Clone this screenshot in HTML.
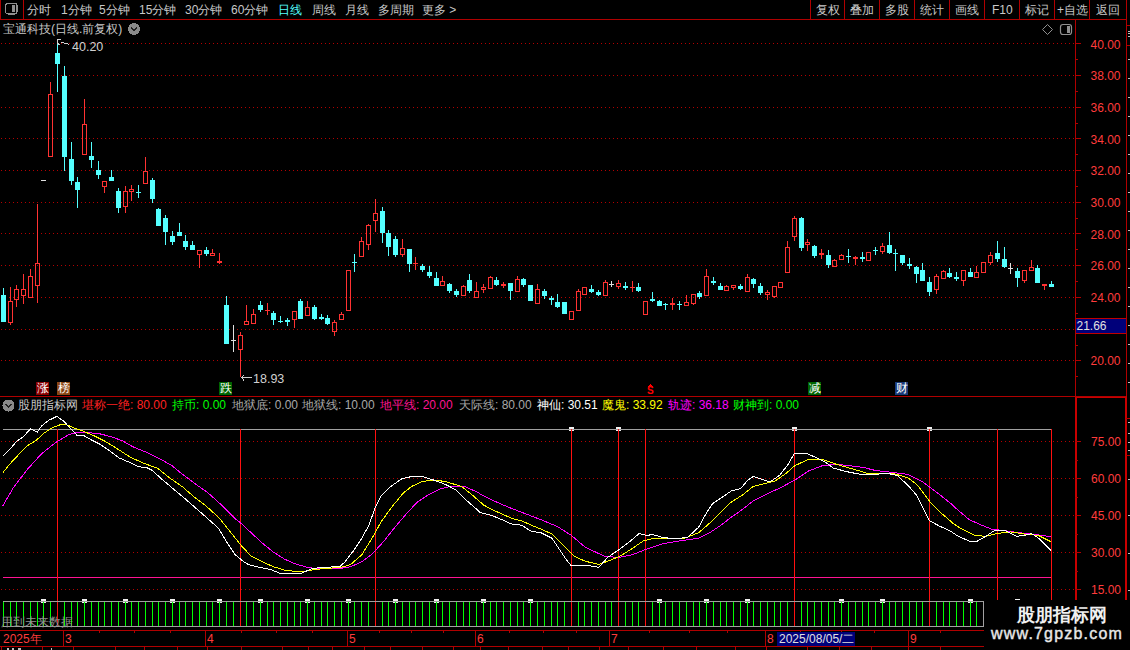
<!DOCTYPE html>
<html><head><meta charset="utf-8"><style>
html,body{margin:0;padding:0;background:#000;}
body{width:1130px;height:650px;position:relative;overflow:hidden;font-family:"Liberation Sans",sans-serif;}
svg{position:absolute;left:0;top:0;shape-rendering:crispEdges;}
.t{position:absolute;white-space:nowrap;line-height:14px;font-size:12px;}
</style></head><body>
<svg width="1130" height="650" viewBox="0 0 1130 650">
<line x1="0" y1="19.5" x2="1126" y2="19.5" stroke="#b00000"/>
<line x1="0.5" y1="0" x2="0.5" y2="19" stroke="#b00000"/>
<line x1="23.5" y1="0" x2="23.5" y2="19" stroke="#b00000"/>
<rect x="5.5" y="3.5" width="11.5" height="10.5" rx="2.5" fill="none" stroke="#909090" stroke-width="1.2"/>
<rect x="12" y="5" width="3" height="7" fill="#909090"/>
<line x1="810.5" y1="0" x2="810.5" y2="19" stroke="#b00000"/>
<line x1="844.5" y1="0" x2="844.5" y2="19" stroke="#b00000"/>
<line x1="879.5" y1="0" x2="879.5" y2="19" stroke="#b00000"/>
<line x1="914.5" y1="0" x2="914.5" y2="19" stroke="#b00000"/>
<line x1="949.5" y1="0" x2="949.5" y2="19" stroke="#b00000"/>
<line x1="984.5" y1="0" x2="984.5" y2="19" stroke="#b00000"/>
<line x1="1019.5" y1="0" x2="1019.5" y2="19" stroke="#b00000"/>
<line x1="1054.5" y1="0" x2="1054.5" y2="19" stroke="#b00000"/>
<line x1="1089.5" y1="0" x2="1089.5" y2="19" stroke="#b00000"/>
<line x1="1" y1="43.5" x2="1075" y2="43.5" stroke="#b40000" stroke-width="1" stroke-dasharray="1 3"/>
<line x1="1" y1="75.5" x2="1075" y2="75.5" stroke="#b40000" stroke-width="1" stroke-dasharray="1 3"/>
<line x1="1" y1="107.5" x2="1075" y2="107.5" stroke="#b40000" stroke-width="1" stroke-dasharray="1 3"/>
<line x1="1" y1="138.5" x2="1075" y2="138.5" stroke="#b40000" stroke-width="1" stroke-dasharray="1 3"/>
<line x1="1" y1="170.5" x2="1075" y2="170.5" stroke="#b40000" stroke-width="1" stroke-dasharray="1 3"/>
<line x1="1" y1="202.5" x2="1075" y2="202.5" stroke="#b40000" stroke-width="1" stroke-dasharray="1 3"/>
<line x1="1" y1="233.5" x2="1075" y2="233.5" stroke="#b40000" stroke-width="1" stroke-dasharray="1 3"/>
<line x1="1" y1="265.5" x2="1075" y2="265.5" stroke="#b40000" stroke-width="1" stroke-dasharray="1 3"/>
<line x1="1" y1="297.5" x2="1075" y2="297.5" stroke="#b40000" stroke-width="1" stroke-dasharray="1 3"/>
<line x1="1" y1="329.5" x2="1075" y2="329.5" stroke="#b40000" stroke-width="1" stroke-dasharray="1 3"/>
<line x1="1" y1="360.5" x2="1075" y2="360.5" stroke="#b40000" stroke-width="1" stroke-dasharray="1 3"/>
<line x1="1075.5" y1="20" x2="1075.5" y2="396" stroke="#b00000" stroke-width="1"/>
<line x1="1126.5" y1="0" x2="1126.5" y2="396" stroke="#b00000" stroke-width="1"/>
<rect x="1075" y="396" width="2" height="254" fill="#c80000"/>
<rect x="1125" y="396" width="2" height="254" fill="#c80000"/>
<rect x="1075" y="396" width="52" height="2" fill="#c80000"/>
<line x1="1075" y1="376.5" x2="1078" y2="376.5" stroke="#b00000"/>
<line x1="1075" y1="360.5" x2="1081" y2="360.5" stroke="#b00000"/>
<line x1="1075" y1="345.5" x2="1078" y2="345.5" stroke="#b00000"/>
<line x1="1075" y1="329.5" x2="1081" y2="329.5" stroke="#b00000"/>
<line x1="1075" y1="313.5" x2="1078" y2="313.5" stroke="#b00000"/>
<line x1="1075" y1="297.5" x2="1081" y2="297.5" stroke="#b00000"/>
<line x1="1075" y1="281.5" x2="1078" y2="281.5" stroke="#b00000"/>
<line x1="1075" y1="265.5" x2="1081" y2="265.5" stroke="#b00000"/>
<line x1="1075" y1="249.5" x2="1078" y2="249.5" stroke="#b00000"/>
<line x1="1075" y1="233.5" x2="1081" y2="233.5" stroke="#b00000"/>
<line x1="1075" y1="218.5" x2="1078" y2="218.5" stroke="#b00000"/>
<line x1="1075" y1="202.5" x2="1081" y2="202.5" stroke="#b00000"/>
<line x1="1075" y1="186.5" x2="1078" y2="186.5" stroke="#b00000"/>
<line x1="1075" y1="170.5" x2="1081" y2="170.5" stroke="#b00000"/>
<line x1="1075" y1="154.5" x2="1078" y2="154.5" stroke="#b00000"/>
<line x1="1075" y1="138.5" x2="1081" y2="138.5" stroke="#b00000"/>
<line x1="1075" y1="123.5" x2="1078" y2="123.5" stroke="#b00000"/>
<line x1="1075" y1="107.5" x2="1081" y2="107.5" stroke="#b00000"/>
<line x1="1075" y1="91.5" x2="1078" y2="91.5" stroke="#b00000"/>
<line x1="1075" y1="75.5" x2="1081" y2="75.5" stroke="#b00000"/>
<line x1="1075" y1="59.5" x2="1078" y2="59.5" stroke="#b00000"/>
<line x1="1075" y1="43.5" x2="1081" y2="43.5" stroke="#b00000"/>
<line x1="1126" y1="25.5" x2="1130" y2="25.5" stroke="#b00000"/>
<line x1="1126" y1="45.5" x2="1130" y2="45.5" stroke="#b00000"/>
<line x1="1128" y1="31.5" x2="1130" y2="31.5" stroke="#c0c0c0"/>
<line x1="1128" y1="33.5" x2="1130" y2="33.5" stroke="#c0c0c0"/>
<line x1="1128" y1="36.5" x2="1130" y2="36.5" stroke="#c0c0c0"/>
<line x1="1128" y1="59.5" x2="1130" y2="59.5" stroke="#c0c0c0"/>
<line x1="1128" y1="78.5" x2="1130" y2="78.5" stroke="#c0c0c0"/>
<line x1="1128" y1="97.5" x2="1130" y2="97.5" stroke="#c0c0c0"/>
<line x1="1128" y1="116.5" x2="1130" y2="116.5" stroke="#c0c0c0"/>
<line x1="1128" y1="135.5" x2="1130" y2="135.5" stroke="#c0c0c0"/>
<line x1="1128" y1="154.5" x2="1130" y2="154.5" stroke="#c0c0c0"/>
<line x1="1128" y1="173.5" x2="1130" y2="173.5" stroke="#c0c0c0"/>
<line x1="1128" y1="192.5" x2="1130" y2="192.5" stroke="#c0c0c0"/>
<line x1="1128" y1="211.5" x2="1130" y2="211.5" stroke="#c0c0c0"/>
<line x1="1128" y1="230.5" x2="1130" y2="230.5" stroke="#c0c0c0"/>
<line x1="1128" y1="249.5" x2="1130" y2="249.5" stroke="#c0c0c0"/>
<line x1="1128" y1="268.5" x2="1130" y2="268.5" stroke="#c0c0c0"/>
<line x1="1128" y1="287.5" x2="1130" y2="287.5" stroke="#c0c0c0"/>
<line x1="1128" y1="306.5" x2="1130" y2="306.5" stroke="#c0c0c0"/>
<line x1="1128" y1="325.5" x2="1130" y2="325.5" stroke="#c0c0c0"/>
<line x1="1128" y1="344.5" x2="1130" y2="344.5" stroke="#c0c0c0"/>
<line x1="1128" y1="363.5" x2="1130" y2="363.5" stroke="#c0c0c0"/>
<line x1="1128" y1="382.5" x2="1130" y2="382.5" stroke="#c0c0c0"/>
<line x1="3.5" y1="288" x2="3.5" y2="322" stroke="#54ffff"/>
<rect x="1" y="295" width="5" height="27" fill="#54ffff"/>
<line x1="10.5" y1="287" x2="10.5" y2="301" stroke="#ff3232"/>
<line x1="10.5" y1="323" x2="10.5" y2="325" stroke="#ff3232"/>
<rect x="8.5" y="301.5" width="4" height="21" fill="none" stroke="#ff3232"/>
<line x1="16.5" y1="285" x2="16.5" y2="289" stroke="#ff3232"/>
<line x1="16.5" y1="300" x2="16.5" y2="307" stroke="#ff3232"/>
<rect x="14.5" y="289.5" width="4" height="10" fill="none" stroke="#ff3232"/>
<line x1="23.5" y1="274" x2="23.5" y2="289" stroke="#ff3232"/>
<line x1="23.5" y1="296" x2="23.5" y2="304" stroke="#ff3232"/>
<rect x="21.5" y="289.5" width="4" height="6" fill="none" stroke="#ff3232"/>
<line x1="30.5" y1="269" x2="30.5" y2="276" stroke="#ff3232"/>
<rect x="28.5" y="276.5" width="4" height="21" fill="none" stroke="#ff3232"/>
<line x1="37.5" y1="204" x2="37.5" y2="263" stroke="#ff3232"/>
<line x1="37.5" y1="286" x2="37.5" y2="303" stroke="#ff3232"/>
<rect x="35.5" y="263.5" width="4" height="22" fill="none" stroke="#ff3232"/>
<line x1="43.5" y1="180" x2="43.5" y2="181" stroke="#e0e0e0"/>
<rect x="41" y="180" width="5" height="1" fill="#e0e0e0"/>
<line x1="50.5" y1="82" x2="50.5" y2="94" stroke="#ff3232"/>
<rect x="48.5" y="94.5" width="4" height="62" fill="none" stroke="#ff3232"/>
<line x1="57.5" y1="40" x2="57.5" y2="92" stroke="#54ffff"/>
<rect x="55" y="53" width="5" height="11" fill="#54ffff"/>
<line x1="64.5" y1="66" x2="64.5" y2="171" stroke="#54ffff"/>
<rect x="62" y="76" width="5" height="81" fill="#54ffff"/>
<line x1="71.5" y1="142" x2="71.5" y2="185" stroke="#54ffff"/>
<rect x="69" y="159" width="5" height="22" fill="#54ffff"/>
<line x1="77.5" y1="177" x2="77.5" y2="208" stroke="#54ffff"/>
<rect x="75" y="182" width="5" height="8" fill="#54ffff"/>
<line x1="84.5" y1="99" x2="84.5" y2="124" stroke="#ff3232"/>
<rect x="82.5" y="124.5" width="4" height="30" fill="none" stroke="#ff3232"/>
<line x1="91.5" y1="142" x2="91.5" y2="168" stroke="#54ffff"/>
<rect x="89" y="156" width="5" height="4" fill="#54ffff"/>
<line x1="98.5" y1="161" x2="98.5" y2="179" stroke="#54ffff"/>
<rect x="96" y="170" width="5" height="5" fill="#54ffff"/>
<line x1="104.5" y1="187" x2="104.5" y2="193" stroke="#ff3232"/>
<rect x="102.5" y="181.5" width="4" height="5" fill="none" stroke="#ff3232"/>
<line x1="111.5" y1="170" x2="111.5" y2="181" stroke="#54ffff"/>
<rect x="109" y="177" width="5" height="4" fill="#54ffff"/>
<line x1="118.5" y1="188" x2="118.5" y2="213" stroke="#54ffff"/>
<rect x="116" y="191" width="5" height="17" fill="#54ffff"/>
<line x1="125.5" y1="186" x2="125.5" y2="191" stroke="#ff3232"/>
<line x1="125.5" y1="207" x2="125.5" y2="213" stroke="#ff3232"/>
<rect x="123.5" y="191.5" width="4" height="15" fill="none" stroke="#ff3232"/>
<line x1="131.5" y1="185" x2="131.5" y2="189" stroke="#ff3232"/>
<line x1="131.5" y1="192" x2="131.5" y2="201" stroke="#ff3232"/>
<rect x="129.5" y="189.5" width="4" height="2" fill="none" stroke="#ff3232"/>
<line x1="138.5" y1="185" x2="138.5" y2="198" stroke="#54ffff"/>
<rect x="136" y="192" width="5" height="1" fill="#54ffff"/>
<line x1="145.5" y1="157" x2="145.5" y2="171" stroke="#ff3232"/>
<rect x="143.5" y="171.5" width="4" height="12" fill="none" stroke="#ff3232"/>
<line x1="152.5" y1="178" x2="152.5" y2="203" stroke="#54ffff"/>
<rect x="150" y="180" width="5" height="19" fill="#54ffff"/>
<line x1="158.5" y1="208" x2="158.5" y2="226" stroke="#54ffff"/>
<rect x="156" y="209" width="5" height="17" fill="#54ffff"/>
<line x1="165.5" y1="215" x2="165.5" y2="245" stroke="#54ffff"/>
<rect x="163" y="218" width="5" height="14" fill="#54ffff"/>
<line x1="172.5" y1="231" x2="172.5" y2="245" stroke="#54ffff"/>
<rect x="170" y="236" width="5" height="6" fill="#54ffff"/>
<line x1="179.5" y1="223" x2="179.5" y2="236" stroke="#54ffff"/>
<rect x="177" y="232" width="5" height="4" fill="#54ffff"/>
<line x1="185.5" y1="235" x2="185.5" y2="250" stroke="#54ffff"/>
<rect x="183" y="241" width="5" height="6" fill="#54ffff"/>
<line x1="192.5" y1="241" x2="192.5" y2="250" stroke="#54ffff"/>
<rect x="190" y="245" width="5" height="5" fill="#54ffff"/>
<line x1="199.5" y1="255" x2="199.5" y2="268" stroke="#ff3232"/>
<rect x="197.5" y="250.5" width="4" height="4" fill="none" stroke="#ff3232"/>
<line x1="206.5" y1="247" x2="206.5" y2="256" stroke="#54ffff"/>
<rect x="204" y="250" width="5" height="4" fill="#54ffff"/>
<line x1="212.5" y1="249" x2="212.5" y2="253" stroke="#ff3232"/>
<rect x="210.5" y="253.5" width="4" height="2" fill="none" stroke="#ff3232"/>
<line x1="219.5" y1="253" x2="219.5" y2="261" stroke="#ff3232"/>
<line x1="219.5" y1="263" x2="219.5" y2="264" stroke="#ff3232"/>
<rect x="217.5" y="261.5" width="4" height="1" fill="none" stroke="#ff3232"/>
<line x1="226.5" y1="296" x2="226.5" y2="344" stroke="#54ffff"/>
<rect x="224" y="305" width="5" height="39" fill="#54ffff"/>
<line x1="233.5" y1="325" x2="233.5" y2="352" stroke="#e0e0e0"/>
<rect x="231" y="340" width="5" height="1" fill="#e0e0e0"/>
<line x1="240.5" y1="332" x2="240.5" y2="335" stroke="#ff3232"/>
<line x1="240.5" y1="350" x2="240.5" y2="377" stroke="#ff3232"/>
<rect x="238.5" y="335.5" width="4" height="14" fill="none" stroke="#ff3232"/>
<line x1="246.5" y1="305" x2="246.5" y2="321" stroke="#ff3232"/>
<rect x="244.5" y="321.5" width="4" height="3" fill="none" stroke="#ff3232"/>
<line x1="253.5" y1="309" x2="253.5" y2="314" stroke="#ff3232"/>
<rect x="251.5" y="314.5" width="4" height="9" fill="none" stroke="#ff3232"/>
<line x1="260.5" y1="301" x2="260.5" y2="312" stroke="#54ffff"/>
<rect x="258" y="305" width="5" height="5" fill="#54ffff"/>
<line x1="267.5" y1="303" x2="267.5" y2="310" stroke="#ff3232"/>
<line x1="267.5" y1="311" x2="267.5" y2="315" stroke="#ff3232"/>
<rect x="265" y="310" width="5" height="1" fill="#ff3232"/>
<line x1="273.5" y1="311" x2="273.5" y2="325" stroke="#54ffff"/>
<rect x="271" y="313" width="5" height="7" fill="#54ffff"/>
<line x1="280.5" y1="316" x2="280.5" y2="323" stroke="#54ffff"/>
<rect x="278" y="321" width="5" height="1" fill="#54ffff"/>
<line x1="287.5" y1="318" x2="287.5" y2="326" stroke="#54ffff"/>
<rect x="285" y="320" width="5" height="2" fill="#54ffff"/>
<line x1="294.5" y1="320" x2="294.5" y2="328" stroke="#ff3232"/>
<rect x="292.5" y="311.5" width="4" height="8" fill="none" stroke="#ff3232"/>
<line x1="300.5" y1="299" x2="300.5" y2="319" stroke="#54ffff"/>
<rect x="298" y="301" width="5" height="18" fill="#54ffff"/>
<line x1="307.5" y1="301" x2="307.5" y2="307" stroke="#ff3232"/>
<rect x="305.5" y="307.5" width="4" height="8" fill="none" stroke="#ff3232"/>
<line x1="314.5" y1="305" x2="314.5" y2="320" stroke="#54ffff"/>
<rect x="312" y="307" width="5" height="12" fill="#54ffff"/>
<line x1="321.5" y1="314" x2="321.5" y2="320" stroke="#54ffff"/>
<rect x="319" y="317" width="5" height="2" fill="#54ffff"/>
<line x1="327.5" y1="315" x2="327.5" y2="325" stroke="#54ffff"/>
<rect x="325" y="318" width="5" height="6" fill="#54ffff"/>
<line x1="334.5" y1="320" x2="334.5" y2="322" stroke="#ff3232"/>
<line x1="334.5" y1="332" x2="334.5" y2="336" stroke="#ff3232"/>
<rect x="332.5" y="322.5" width="4" height="9" fill="none" stroke="#ff3232"/>
<line x1="341.5" y1="312" x2="341.5" y2="314" stroke="#ff3232"/>
<rect x="339.5" y="314.5" width="4" height="5" fill="none" stroke="#ff3232"/>
<rect x="346.5" y="270.5" width="4" height="40" fill="none" stroke="#ff3232"/>
<line x1="354.5" y1="254" x2="354.5" y2="272" stroke="#54ffff"/>
<rect x="352" y="262" width="5" height="1" fill="#54ffff"/>
<line x1="361.5" y1="237" x2="361.5" y2="241" stroke="#ff3232"/>
<rect x="359.5" y="241.5" width="4" height="15" fill="none" stroke="#ff3232"/>
<line x1="368.5" y1="224" x2="368.5" y2="225" stroke="#ff3232"/>
<line x1="368.5" y1="245" x2="368.5" y2="250" stroke="#ff3232"/>
<rect x="366.5" y="225.5" width="4" height="19" fill="none" stroke="#ff3232"/>
<line x1="375.5" y1="199" x2="375.5" y2="213" stroke="#ff3232"/>
<line x1="375.5" y1="221" x2="375.5" y2="232" stroke="#ff3232"/>
<rect x="373.5" y="213.5" width="4" height="7" fill="none" stroke="#ff3232"/>
<line x1="382.5" y1="207" x2="382.5" y2="243" stroke="#54ffff"/>
<rect x="380" y="211" width="5" height="22" fill="#54ffff"/>
<line x1="388.5" y1="230" x2="388.5" y2="256" stroke="#54ffff"/>
<rect x="386" y="233" width="5" height="14" fill="#54ffff"/>
<line x1="395.5" y1="236" x2="395.5" y2="257" stroke="#54ffff"/>
<rect x="393" y="239" width="5" height="16" fill="#54ffff"/>
<line x1="402.5" y1="239" x2="402.5" y2="248" stroke="#ff3232"/>
<line x1="402.5" y1="255" x2="402.5" y2="257" stroke="#ff3232"/>
<rect x="400.5" y="248.5" width="4" height="6" fill="none" stroke="#ff3232"/>
<line x1="409.5" y1="249" x2="409.5" y2="272" stroke="#54ffff"/>
<rect x="407" y="249" width="5" height="15" fill="#54ffff"/>
<line x1="415.5" y1="257" x2="415.5" y2="263" stroke="#ff3232"/>
<line x1="415.5" y1="264" x2="415.5" y2="270" stroke="#ff3232"/>
<rect x="413" y="263" width="5" height="1" fill="#ff3232"/>
<line x1="422.5" y1="264" x2="422.5" y2="272" stroke="#54ffff"/>
<rect x="420" y="266" width="5" height="4" fill="#54ffff"/>
<line x1="429.5" y1="266" x2="429.5" y2="278" stroke="#54ffff"/>
<rect x="427" y="272" width="5" height="4" fill="#54ffff"/>
<line x1="436.5" y1="272" x2="436.5" y2="286" stroke="#54ffff"/>
<rect x="434" y="278" width="5" height="8" fill="#54ffff"/>
<line x1="442.5" y1="276" x2="442.5" y2="281" stroke="#ff3232"/>
<rect x="440.5" y="281.5" width="4" height="4" fill="none" stroke="#ff3232"/>
<line x1="449.5" y1="283" x2="449.5" y2="293" stroke="#54ffff"/>
<rect x="447" y="284" width="5" height="7" fill="#54ffff"/>
<line x1="456.5" y1="289" x2="456.5" y2="297" stroke="#54ffff"/>
<rect x="454" y="291" width="5" height="4" fill="#54ffff"/>
<line x1="463.5" y1="285" x2="463.5" y2="286" stroke="#ff3232"/>
<rect x="461.5" y="286.5" width="4" height="9" fill="none" stroke="#ff3232"/>
<line x1="469.5" y1="274" x2="469.5" y2="293" stroke="#54ffff"/>
<rect x="467" y="280" width="5" height="11" fill="#54ffff"/>
<line x1="476.5" y1="282" x2="476.5" y2="291" stroke="#ff3232"/>
<rect x="474.5" y="291.5" width="4" height="6" fill="none" stroke="#ff3232"/>
<line x1="483.5" y1="284" x2="483.5" y2="287" stroke="#ff3232"/>
<line x1="483.5" y1="290" x2="483.5" y2="293" stroke="#ff3232"/>
<rect x="481.5" y="287.5" width="4" height="2" fill="none" stroke="#ff3232"/>
<line x1="490.5" y1="276" x2="490.5" y2="277" stroke="#ff3232"/>
<rect x="488.5" y="277.5" width="4" height="11" fill="none" stroke="#ff3232"/>
<line x1="496.5" y1="277" x2="496.5" y2="286" stroke="#54ffff"/>
<rect x="494" y="280" width="5" height="5" fill="#54ffff"/>
<line x1="503.5" y1="282" x2="503.5" y2="284" stroke="#ff3232"/>
<line x1="503.5" y1="286" x2="503.5" y2="288" stroke="#ff3232"/>
<rect x="501.5" y="284.5" width="4" height="1" fill="none" stroke="#ff3232"/>
<line x1="510.5" y1="283" x2="510.5" y2="300" stroke="#54ffff"/>
<rect x="508" y="283" width="5" height="8" fill="#54ffff"/>
<line x1="517.5" y1="276" x2="517.5" y2="279" stroke="#ff3232"/>
<rect x="515.5" y="279.5" width="4" height="12" fill="none" stroke="#ff3232"/>
<line x1="523.5" y1="278" x2="523.5" y2="287" stroke="#54ffff"/>
<rect x="521" y="279" width="5" height="6" fill="#54ffff"/>
<line x1="530.5" y1="285" x2="530.5" y2="301" stroke="#54ffff"/>
<rect x="528" y="285" width="5" height="16" fill="#54ffff"/>
<line x1="537.5" y1="284" x2="537.5" y2="289" stroke="#ff3232"/>
<rect x="535.5" y="289.5" width="4" height="14" fill="none" stroke="#ff3232"/>
<line x1="544.5" y1="289" x2="544.5" y2="299" stroke="#54ffff"/>
<rect x="542" y="291" width="5" height="5" fill="#54ffff"/>
<line x1="551.5" y1="296" x2="551.5" y2="305" stroke="#54ffff"/>
<rect x="549" y="298" width="5" height="2" fill="#54ffff"/>
<line x1="557.5" y1="294" x2="557.5" y2="308" stroke="#54ffff"/>
<rect x="555" y="302" width="5" height="5" fill="#54ffff"/>
<line x1="564.5" y1="302" x2="564.5" y2="314" stroke="#54ffff"/>
<rect x="562" y="302" width="5" height="12" fill="#54ffff"/>
<rect x="569.5" y="311.5" width="4" height="8" fill="none" stroke="#ff3232"/>
<line x1="578.5" y1="289" x2="578.5" y2="291" stroke="#ff3232"/>
<rect x="576.5" y="291.5" width="4" height="19" fill="none" stroke="#ff3232"/>
<rect x="582.5" y="287.5" width="4" height="7" fill="none" stroke="#ff3232"/>
<line x1="591.5" y1="285" x2="591.5" y2="293" stroke="#54ffff"/>
<rect x="589" y="289" width="5" height="3" fill="#54ffff"/>
<line x1="598.5" y1="290" x2="598.5" y2="296" stroke="#54ffff"/>
<rect x="596" y="292" width="5" height="3" fill="#54ffff"/>
<line x1="605.5" y1="280" x2="605.5" y2="282" stroke="#ff3232"/>
<rect x="603.5" y="282.5" width="4" height="13" fill="none" stroke="#ff3232"/>
<line x1="611.5" y1="281" x2="611.5" y2="287" stroke="#e0e0e0"/>
<rect x="609" y="284" width="5" height="1" fill="#e0e0e0"/>
<line x1="618.5" y1="280" x2="618.5" y2="283" stroke="#ff3232"/>
<line x1="618.5" y1="287" x2="618.5" y2="289" stroke="#ff3232"/>
<rect x="616.5" y="283.5" width="4" height="3" fill="none" stroke="#ff3232"/>
<line x1="625.5" y1="282" x2="625.5" y2="290" stroke="#54ffff"/>
<rect x="623" y="286" width="5" height="2" fill="#54ffff"/>
<line x1="632.5" y1="281" x2="632.5" y2="287" stroke="#ff3232"/>
<line x1="632.5" y1="288" x2="632.5" y2="292" stroke="#ff3232"/>
<rect x="630" y="287" width="5" height="1" fill="#ff3232"/>
<line x1="638.5" y1="283" x2="638.5" y2="292" stroke="#54ffff"/>
<rect x="636" y="287" width="5" height="4" fill="#54ffff"/>
<rect x="643.5" y="301.5" width="4" height="13" fill="none" stroke="#ff3232"/>
<line x1="652.5" y1="292" x2="652.5" y2="302" stroke="#54ffff"/>
<rect x="650" y="299" width="5" height="2" fill="#54ffff"/>
<line x1="659.5" y1="300" x2="659.5" y2="306" stroke="#54ffff"/>
<rect x="657" y="301" width="5" height="5" fill="#54ffff"/>
<line x1="665.5" y1="303" x2="665.5" y2="310" stroke="#54ffff"/>
<rect x="663" y="304" width="5" height="1" fill="#54ffff"/>
<line x1="672.5" y1="298" x2="672.5" y2="303" stroke="#ff3232"/>
<line x1="672.5" y1="305" x2="672.5" y2="310" stroke="#ff3232"/>
<rect x="670.5" y="303.5" width="4" height="1" fill="none" stroke="#ff3232"/>
<line x1="679.5" y1="301" x2="679.5" y2="310" stroke="#54ffff"/>
<rect x="677" y="304" width="5" height="1" fill="#54ffff"/>
<line x1="686.5" y1="295" x2="686.5" y2="302" stroke="#ff3232"/>
<rect x="684.5" y="302.5" width="4" height="3" fill="none" stroke="#ff3232"/>
<line x1="693.5" y1="304" x2="693.5" y2="305" stroke="#ff3232"/>
<rect x="691.5" y="294.5" width="4" height="9" fill="none" stroke="#ff3232"/>
<line x1="699.5" y1="291" x2="699.5" y2="299" stroke="#54ffff"/>
<rect x="697" y="293" width="5" height="4" fill="#54ffff"/>
<line x1="706.5" y1="269" x2="706.5" y2="276" stroke="#ff3232"/>
<rect x="704.5" y="276.5" width="4" height="19" fill="none" stroke="#ff3232"/>
<line x1="713.5" y1="277" x2="713.5" y2="285" stroke="#54ffff"/>
<rect x="711" y="281" width="5" height="2" fill="#54ffff"/>
<line x1="720.5" y1="283" x2="720.5" y2="290" stroke="#54ffff"/>
<rect x="718" y="286" width="5" height="4" fill="#54ffff"/>
<line x1="726.5" y1="285" x2="726.5" y2="286" stroke="#ff3232"/>
<rect x="724.5" y="286.5" width="4" height="4" fill="none" stroke="#ff3232"/>
<line x1="733.5" y1="288" x2="733.5" y2="290" stroke="#ff3232"/>
<rect x="731.5" y="285.5" width="4" height="2" fill="none" stroke="#ff3232"/>
<line x1="740.5" y1="284" x2="740.5" y2="290" stroke="#54ffff"/>
<rect x="738" y="286" width="5" height="3" fill="#54ffff"/>
<line x1="747.5" y1="274" x2="747.5" y2="277" stroke="#ff3232"/>
<rect x="745.5" y="277.5" width="4" height="14" fill="none" stroke="#ff3232"/>
<line x1="753.5" y1="278" x2="753.5" y2="288" stroke="#54ffff"/>
<rect x="751" y="279" width="5" height="5" fill="#54ffff"/>
<line x1="760.5" y1="283" x2="760.5" y2="295" stroke="#54ffff"/>
<rect x="758" y="286" width="5" height="7" fill="#54ffff"/>
<line x1="767.5" y1="290" x2="767.5" y2="292" stroke="#ff3232"/>
<line x1="767.5" y1="295" x2="767.5" y2="300" stroke="#ff3232"/>
<rect x="765.5" y="292.5" width="4" height="2" fill="none" stroke="#ff3232"/>
<line x1="774.5" y1="297" x2="774.5" y2="298" stroke="#ff3232"/>
<rect x="772.5" y="286.5" width="4" height="10" fill="none" stroke="#ff3232"/>
<rect x="778.5" y="282.5" width="4" height="5" fill="none" stroke="#ff3232"/>
<line x1="787.5" y1="241" x2="787.5" y2="247" stroke="#ff3232"/>
<rect x="785.5" y="247.5" width="4" height="25" fill="none" stroke="#ff3232"/>
<line x1="794.5" y1="216" x2="794.5" y2="218" stroke="#ff3232"/>
<line x1="794.5" y1="237" x2="794.5" y2="241" stroke="#ff3232"/>
<rect x="792.5" y="218.5" width="4" height="18" fill="none" stroke="#ff3232"/>
<line x1="801.5" y1="217" x2="801.5" y2="251" stroke="#54ffff"/>
<rect x="799" y="218" width="5" height="30" fill="#54ffff"/>
<line x1="807.5" y1="239" x2="807.5" y2="242" stroke="#ff3232"/>
<line x1="807.5" y1="245" x2="807.5" y2="251" stroke="#ff3232"/>
<rect x="805.5" y="242.5" width="4" height="2" fill="none" stroke="#ff3232"/>
<line x1="814.5" y1="245" x2="814.5" y2="258" stroke="#54ffff"/>
<rect x="812" y="246" width="5" height="10" fill="#54ffff"/>
<line x1="821.5" y1="249" x2="821.5" y2="253" stroke="#ff3232"/>
<line x1="821.5" y1="255" x2="821.5" y2="259" stroke="#ff3232"/>
<rect x="819.5" y="253.5" width="4" height="1" fill="none" stroke="#ff3232"/>
<line x1="828.5" y1="250" x2="828.5" y2="268" stroke="#54ffff"/>
<rect x="826" y="255" width="5" height="10" fill="#54ffff"/>
<line x1="834.5" y1="259" x2="834.5" y2="260" stroke="#ff3232"/>
<rect x="832.5" y="260.5" width="4" height="6" fill="none" stroke="#ff3232"/>
<line x1="841.5" y1="254" x2="841.5" y2="255" stroke="#ff3232"/>
<rect x="839.5" y="255.5" width="4" height="4" fill="none" stroke="#ff3232"/>
<line x1="848.5" y1="249" x2="848.5" y2="263" stroke="#54ffff"/>
<rect x="846" y="256" width="5" height="1" fill="#54ffff"/>
<line x1="855.5" y1="256" x2="855.5" y2="257" stroke="#ff3232"/>
<line x1="855.5" y1="259" x2="855.5" y2="265" stroke="#ff3232"/>
<rect x="853.5" y="257.5" width="4" height="1" fill="none" stroke="#ff3232"/>
<line x1="862.5" y1="252" x2="862.5" y2="262" stroke="#54ffff"/>
<rect x="860" y="257" width="5" height="2" fill="#54ffff"/>
<rect x="866.5" y="252.5" width="4" height="8" fill="none" stroke="#ff3232"/>
<line x1="875.5" y1="247" x2="875.5" y2="255" stroke="#54ffff"/>
<rect x="873" y="250" width="5" height="1" fill="#54ffff"/>
<line x1="882.5" y1="243" x2="882.5" y2="246" stroke="#ff3232"/>
<line x1="882.5" y1="252" x2="882.5" y2="254" stroke="#ff3232"/>
<rect x="880.5" y="246.5" width="4" height="5" fill="none" stroke="#ff3232"/>
<line x1="889.5" y1="232" x2="889.5" y2="254" stroke="#54ffff"/>
<rect x="887" y="245" width="5" height="8" fill="#54ffff"/>
<line x1="895.5" y1="249" x2="895.5" y2="271" stroke="#54ffff"/>
<rect x="893" y="253" width="5" height="1" fill="#54ffff"/>
<line x1="902.5" y1="255" x2="902.5" y2="265" stroke="#54ffff"/>
<rect x="900" y="255" width="5" height="8" fill="#54ffff"/>
<line x1="909.5" y1="258" x2="909.5" y2="269" stroke="#54ffff"/>
<rect x="907" y="264" width="5" height="2" fill="#54ffff"/>
<line x1="916.5" y1="266" x2="916.5" y2="283" stroke="#54ffff"/>
<rect x="914" y="267" width="5" height="7" fill="#54ffff"/>
<line x1="922.5" y1="263" x2="922.5" y2="281" stroke="#54ffff"/>
<rect x="920" y="270" width="5" height="11" fill="#54ffff"/>
<line x1="929.5" y1="277" x2="929.5" y2="296" stroke="#54ffff"/>
<rect x="927" y="282" width="5" height="10" fill="#54ffff"/>
<line x1="936.5" y1="274" x2="936.5" y2="276" stroke="#ff3232"/>
<line x1="936.5" y1="290" x2="936.5" y2="294" stroke="#ff3232"/>
<rect x="934.5" y="276.5" width="4" height="13" fill="none" stroke="#ff3232"/>
<line x1="943.5" y1="270" x2="943.5" y2="271" stroke="#ff3232"/>
<rect x="941.5" y="271.5" width="4" height="7" fill="none" stroke="#ff3232"/>
<line x1="949.5" y1="268" x2="949.5" y2="278" stroke="#54ffff"/>
<rect x="947" y="273" width="5" height="4" fill="#54ffff"/>
<line x1="956.5" y1="272" x2="956.5" y2="281" stroke="#54ffff"/>
<rect x="954" y="277" width="5" height="2" fill="#54ffff"/>
<line x1="963.5" y1="281" x2="963.5" y2="286" stroke="#ff3232"/>
<rect x="961.5" y="270.5" width="4" height="10" fill="none" stroke="#ff3232"/>
<line x1="970.5" y1="268" x2="970.5" y2="277" stroke="#54ffff"/>
<rect x="968" y="272" width="5" height="5" fill="#54ffff"/>
<line x1="976.5" y1="266" x2="976.5" y2="272" stroke="#ff3232"/>
<rect x="974.5" y="272.5" width="4" height="5" fill="none" stroke="#ff3232"/>
<rect x="981.5" y="262.5" width="4" height="10" fill="none" stroke="#ff3232"/>
<line x1="990.5" y1="252" x2="990.5" y2="255" stroke="#ff3232"/>
<line x1="990.5" y1="263" x2="990.5" y2="265" stroke="#ff3232"/>
<rect x="988.5" y="255.5" width="4" height="7" fill="none" stroke="#ff3232"/>
<line x1="997.5" y1="241" x2="997.5" y2="262" stroke="#54ffff"/>
<rect x="995" y="253" width="5" height="6" fill="#54ffff"/>
<line x1="1004.5" y1="247" x2="1004.5" y2="268" stroke="#54ffff"/>
<rect x="1002" y="259" width="5" height="8" fill="#54ffff"/>
<line x1="1010.5" y1="263" x2="1010.5" y2="274" stroke="#e0e0e0"/>
<rect x="1008" y="268" width="5" height="1" fill="#e0e0e0"/>
<line x1="1017.5" y1="268" x2="1017.5" y2="287" stroke="#54ffff"/>
<rect x="1015" y="271" width="5" height="7" fill="#54ffff"/>
<line x1="1024.5" y1="281" x2="1024.5" y2="283" stroke="#ff3232"/>
<rect x="1022.5" y="270.5" width="4" height="10" fill="none" stroke="#ff3232"/>
<line x1="1031.5" y1="260" x2="1031.5" y2="267" stroke="#ff3232"/>
<rect x="1029.5" y="267.5" width="4" height="3" fill="none" stroke="#ff3232"/>
<line x1="1037.5" y1="265" x2="1037.5" y2="283" stroke="#54ffff"/>
<rect x="1035" y="268" width="5" height="15" fill="#54ffff"/>
<line x1="1044.5" y1="286" x2="1044.5" y2="290" stroke="#ff3232"/>
<rect x="1042.5" y="284.5" width="4" height="1" fill="none" stroke="#ff3232"/>
<line x1="1051.5" y1="281" x2="1051.5" y2="287" stroke="#54ffff"/>
<rect x="1049" y="284" width="5" height="3" fill="#54ffff"/>
<line x1="0" y1="396.5" x2="1126" y2="396.5" stroke="#b00000"/>
<line x1="1" y1="441.5" x2="1075" y2="441.5" stroke="#b40000" stroke-width="1" stroke-dasharray="1 3"/>
<line x1="1" y1="478.5" x2="1075" y2="478.5" stroke="#b40000" stroke-width="1" stroke-dasharray="1 3"/>
<line x1="1" y1="515.5" x2="1075" y2="515.5" stroke="#b40000" stroke-width="1" stroke-dasharray="1 3"/>
<line x1="1" y1="552.5" x2="1075" y2="552.5" stroke="#b40000" stroke-width="1" stroke-dasharray="1 3"/>
<line x1="1" y1="589.5" x2="1075" y2="589.5" stroke="#b40000" stroke-width="1" stroke-dasharray="1 3"/>
<line x1="1075" y1="441.5" x2="1081" y2="441.5" stroke="#b00000"/>
<line x1="1075" y1="478.5" x2="1081" y2="478.5" stroke="#b00000"/>
<line x1="1075" y1="515.5" x2="1081" y2="515.5" stroke="#b00000"/>
<line x1="1075" y1="552.5" x2="1081" y2="552.5" stroke="#b00000"/>
<line x1="1075" y1="589.5" x2="1081" y2="589.5" stroke="#b00000"/>
<line x1="1075" y1="460.5" x2="1078" y2="460.5" stroke="#b00000"/>
<line x1="1075" y1="497.5" x2="1078" y2="497.5" stroke="#b00000"/>
<line x1="1075" y1="534.5" x2="1078" y2="534.5" stroke="#b00000"/>
<line x1="1075" y1="571.5" x2="1078" y2="571.5" stroke="#b00000"/>
<line x1="1126" y1="418.5" x2="1130" y2="418.5" stroke="#b00000"/>
<line x1="1126" y1="455.5" x2="1130" y2="455.5" stroke="#b00000"/>
<line x1="1128" y1="422.5" x2="1130" y2="422.5" stroke="#c0c0c0"/>
<line x1="1128" y1="433.5" x2="1130" y2="433.5" stroke="#c0c0c0"/>
<line x1="1128" y1="442.5" x2="1130" y2="442.5" stroke="#c0c0c0"/>
<line x1="1128" y1="450.5" x2="1130" y2="450.5" stroke="#c0c0c0"/>
<line x1="1128" y1="479.5" x2="1130" y2="479.5" stroke="#c0c0c0"/>
<line x1="1128" y1="515.5" x2="1130" y2="515.5" stroke="#c0c0c0"/>
<line x1="1128" y1="553.5" x2="1130" y2="553.5" stroke="#c0c0c0"/>
<line x1="1128" y1="590.5" x2="1130" y2="590.5" stroke="#c0c0c0"/>
<rect x="569" y="427" width="5" height="4" fill="#f0f0f0"/>
<rect x="616" y="427" width="5" height="4" fill="#f0f0f0"/>
<rect x="792" y="427" width="5" height="4" fill="#f0f0f0"/>
<rect x="927" y="427" width="5" height="4" fill="#f0f0f0"/>
<line x1="3" y1="429.5" x2="1051" y2="429.5" stroke="#a0a0a0"/>
<line x1="3" y1="577.5" x2="1051" y2="577.5" stroke="#ff1493"/>
<line x1="57.5" y1="429" x2="57.5" y2="626" stroke="#ff1010"/>
<line x1="240.5" y1="429" x2="240.5" y2="626" stroke="#ff1010"/>
<line x1="375.5" y1="429" x2="375.5" y2="626" stroke="#ff1010"/>
<line x1="571.5" y1="429" x2="571.5" y2="626" stroke="#ff1010"/>
<line x1="618.5" y1="429" x2="618.5" y2="626" stroke="#ff1010"/>
<line x1="645.5" y1="429" x2="645.5" y2="626" stroke="#ff1010"/>
<line x1="794.5" y1="429" x2="794.5" y2="626" stroke="#ff1010"/>
<line x1="929.5" y1="429" x2="929.5" y2="626" stroke="#ff1010"/>
<line x1="997.5" y1="429" x2="997.5" y2="626" stroke="#ff1010"/>
<line x1="1051.5" y1="429" x2="1051.5" y2="626" stroke="#ff1010"/>
<polyline points="2.8,505.8 13.8,487.0 27.7,469.0 41.5,453.8 55.4,442.7 69.2,434.4 77.5,432.4 88.6,432.7 99.7,433.8 110.7,436.6 121.8,440.5 132.9,446.8 146.7,452.4 160.6,459.3 171.7,465.4 182.7,474.5 193.8,482.8 207.6,492.5 221.5,505.0 235.3,518.8 240.0,522.4 251.1,532.7 262.1,542.9 273.2,552.0 284.3,559.0 295.4,563.9 309.2,567.8 323.1,568.9 336.9,568.9 350.7,566.7 361.8,561.7 372.9,553.4 384.0,541.0 395.0,527.1 406.1,514.1 417.2,502.2 428.3,494.7 439.3,489.2 450.4,486.4 464.3,486.4 478.1,492.5 480.0,493.9 493.8,500.8 507.7,506.9 524.3,513.3 540.9,519.7 557.5,526.6 571.4,535.4 585.2,547.3 604.6,556.2 618.4,557.6 632.3,554.8 646.1,549.3 662.7,543.7 679.3,541.0 698.7,538.2 709.8,532.7 720.9,525.2 731.1,517.4 742.1,509.7 753.2,500.8 767.1,493.9 780.9,487.5 794.8,480.1 808.6,470.9 822.4,465.7 836.3,464.3 850.1,465.7 864.0,467.6 875.0,470.4 891.7,472.3 908.3,474.5 922.1,481.4 938.7,493.9 952.6,505.0 955.4,507.8 969.2,519.7 983.1,525.8 991.4,529.1 1005.2,530.8 1019.1,532.7 1032.9,534.1 1051.2,536.8" fill="none" stroke="#ff00ff" stroke-width="1"/>
<polyline points="2.8,472.6 11.1,462.6 19.4,453.8 27.7,445.5 36.0,440.5 44.3,433.0 52.6,427.5 59.5,425.0 66.4,424.7 74.8,428.3 83.1,431.1 94.1,435.8 105.2,441.3 116.3,448.2 130.1,457.1 144.0,463.4 157.8,468.4 168.9,477.3 182.7,487.0 193.8,496.7 204.9,505.0 218.7,517.4 229.8,531.3 240.9,545.1 251.1,556.2 262.1,561.7 273.2,566.7 284.3,570.0 295.4,571.4 303.7,571.4 314.8,569.5 328.6,568.1 339.7,567.8 350.7,564.5 361.8,554.8 372.9,536.8 381.2,521.6 392.3,506.4 403.3,493.1 411.7,486.4 422.7,481.4 433.8,480.1 444.9,481.4 461.5,486.4 472.6,495.3 483.6,505.0 491.1,509.1 502.1,514.1 513.2,518.8 521.5,520.8 532.6,525.7 540.9,529.1 552.0,534.0 563.1,545.1 574.1,556.2 585.2,561.2 599.0,564.5 610.1,560.3 621.2,555.6 632.3,548.4 643.3,541.0 654.4,538.2 668.3,538.2 684.9,538.2 698.7,532.7 709.8,523.0 720.9,511.9 731.1,502.2 742.1,495.3 753.2,486.4 764.3,483.7 775.4,480.9 786.4,473.1 794.8,465.7 808.6,459.3 822.4,459.3 836.3,464.3 852.9,469.0 866.7,473.1 880.6,473.7 894.4,473.7 908.3,478.1 916.6,484.2 930.4,502.2 941.5,513.3 952.6,523.0 960.9,528.5 974.8,535.5 985.8,536.3 996.9,533.5 1010.8,531.9 1024.6,534.1 1038.5,535.5 1051.2,541.8" fill="none" stroke="#ffff00" stroke-width="1"/>
<polyline points="2.8,456.5 9.7,449.6 16.6,441.3 23.5,436.6 30.5,428.8 37.4,432.2 41.5,426.1 48.4,420.5 56.8,416.4 63.7,421.1 70.6,428.8 77.5,435.8 83.1,435.2 91.4,439.9 99.7,444.1 108.0,449.6 119.0,457.9 130.1,462.6 138.4,466.8 146.7,467.6 152.3,470.4 160.6,478.1 171.7,487.5 182.7,496.7 193.8,506.4 204.9,516.1 218.7,528.5 227.0,542.4 235.3,554.8 243.6,561.7 248.3,564.5 259.4,567.3 270.5,569.5 280.1,573.4 300.9,573.4 312.0,568.7 323.1,567.3 339.7,566.7 345.2,561.7 353.5,550.7 361.8,538.2 368.7,525.7 375.7,506.4 381.2,495.8 390.9,486.4 402.0,478.7 411.7,476.5 422.7,476.5 433.8,480.1 444.9,484.2 455.9,489.8 467.0,500.8 478.1,510.5 480.0,512.5 491.1,515.2 502.1,519.7 510.5,523.8 521.5,525.2 531.2,531.3 540.9,532.7 552.0,538.2 560.3,550.7 565.8,559.0 571.4,565.9 582.4,565.3 590.7,565.9 599.0,567.3 607.4,557.6 618.4,550.1 629.5,541.8 639.2,533.5 646.1,535.4 653.0,534.6 662.7,537.4 673.8,538.8 687.6,537.4 698.7,527.1 707.0,511.9 712.6,503.6 720.9,498.1 731.1,491.1 740.8,488.4 747.7,480.1 753.2,476.5 761.5,479.2 769.8,482.0 779.5,475.4 787.8,464.8 794.2,453.8 805.8,453.2 816.9,457.9 825.2,462.1 833.5,468.2 847.4,471.8 861.2,474.5 875.0,474.5 886.1,473.1 897.2,475.4 908.3,485.6 916.6,495.3 923.5,509.1 929.6,520.8 938.7,525.7 949.8,530.7 958.1,536.3 969.2,541.0 977.5,541.0 985.8,536.3 994.2,530.8 1005.2,530.8 1016.3,536.3 1024.6,535.5 1031.5,533.5 1038.5,538.2 1051.2,550.7" fill="none" stroke="#ffffff" stroke-width="1"/>
<rect x="41" y="599" width="5" height="4" fill="#f0f0f0"/>
<rect x="82" y="599" width="5" height="4" fill="#f0f0f0"/>
<rect x="123" y="599" width="5" height="4" fill="#f0f0f0"/>
<rect x="170" y="599" width="5" height="4" fill="#f0f0f0"/>
<rect x="217" y="599" width="5" height="4" fill="#f0f0f0"/>
<rect x="258" y="599" width="5" height="4" fill="#f0f0f0"/>
<rect x="305" y="599" width="5" height="4" fill="#f0f0f0"/>
<rect x="346" y="599" width="5" height="4" fill="#f0f0f0"/>
<rect x="393" y="599" width="5" height="4" fill="#f0f0f0"/>
<rect x="434" y="599" width="5" height="4" fill="#f0f0f0"/>
<rect x="481" y="599" width="5" height="4" fill="#f0f0f0"/>
<rect x="528" y="599" width="5" height="4" fill="#f0f0f0"/>
<rect x="657" y="599" width="5" height="4" fill="#f0f0f0"/>
<rect x="704" y="599" width="5" height="4" fill="#f0f0f0"/>
<rect x="745" y="599" width="5" height="4" fill="#f0f0f0"/>
<rect x="839" y="599" width="5" height="4" fill="#f0f0f0"/>
<rect x="880" y="599" width="5" height="4" fill="#f0f0f0"/>
<rect x="968" y="599" width="5" height="4" fill="#f0f0f0"/>
<rect x="1015" y="599" width="5" height="4" fill="#f0f0f0"/>
<line x1="3.5" y1="601" x2="3.5" y2="626" stroke="#00ff00"/>
<line x1="10.5" y1="601" x2="10.5" y2="626" stroke="#00ff00"/>
<line x1="16.5" y1="601" x2="16.5" y2="626" stroke="#00ff00"/>
<line x1="23.5" y1="601" x2="23.5" y2="626" stroke="#00ff00"/>
<line x1="30.5" y1="601" x2="30.5" y2="626" stroke="#00ff00"/>
<line x1="37.5" y1="601" x2="37.5" y2="626" stroke="#00ff00"/>
<line x1="43.5" y1="601" x2="43.5" y2="626" stroke="#00ff00"/>
<line x1="50.5" y1="601" x2="50.5" y2="626" stroke="#00ff00"/>
<line x1="57.5" y1="601" x2="57.5" y2="626" stroke="#00ff00"/>
<line x1="64.5" y1="601" x2="64.5" y2="626" stroke="#00ff00"/>
<line x1="71.5" y1="601" x2="71.5" y2="626" stroke="#00ff00"/>
<line x1="77.5" y1="601" x2="77.5" y2="626" stroke="#00ff00"/>
<line x1="84.5" y1="601" x2="84.5" y2="626" stroke="#00ff00"/>
<line x1="91.5" y1="601" x2="91.5" y2="626" stroke="#00ff00"/>
<line x1="98.5" y1="601" x2="98.5" y2="626" stroke="#00ff00"/>
<line x1="104.5" y1="601" x2="104.5" y2="626" stroke="#00ff00"/>
<line x1="111.5" y1="601" x2="111.5" y2="626" stroke="#00ff00"/>
<line x1="118.5" y1="601" x2="118.5" y2="626" stroke="#00ff00"/>
<line x1="125.5" y1="601" x2="125.5" y2="626" stroke="#00ff00"/>
<line x1="131.5" y1="601" x2="131.5" y2="626" stroke="#00ff00"/>
<line x1="138.5" y1="601" x2="138.5" y2="626" stroke="#00ff00"/>
<line x1="145.5" y1="601" x2="145.5" y2="626" stroke="#00ff00"/>
<line x1="152.5" y1="601" x2="152.5" y2="626" stroke="#00ff00"/>
<line x1="158.5" y1="601" x2="158.5" y2="626" stroke="#00ff00"/>
<line x1="165.5" y1="601" x2="165.5" y2="626" stroke="#00ff00"/>
<line x1="172.5" y1="601" x2="172.5" y2="626" stroke="#00ff00"/>
<line x1="179.5" y1="601" x2="179.5" y2="626" stroke="#00ff00"/>
<line x1="185.5" y1="601" x2="185.5" y2="626" stroke="#00ff00"/>
<line x1="192.5" y1="601" x2="192.5" y2="626" stroke="#00ff00"/>
<line x1="199.5" y1="601" x2="199.5" y2="626" stroke="#00ff00"/>
<line x1="206.5" y1="601" x2="206.5" y2="626" stroke="#00ff00"/>
<line x1="212.5" y1="601" x2="212.5" y2="626" stroke="#00ff00"/>
<line x1="219.5" y1="601" x2="219.5" y2="626" stroke="#00ff00"/>
<line x1="226.5" y1="601" x2="226.5" y2="626" stroke="#00ff00"/>
<line x1="233.5" y1="601" x2="233.5" y2="626" stroke="#00ff00"/>
<line x1="240.5" y1="601" x2="240.5" y2="626" stroke="#00ff00"/>
<line x1="246.5" y1="601" x2="246.5" y2="626" stroke="#00ff00"/>
<line x1="253.5" y1="601" x2="253.5" y2="626" stroke="#00ff00"/>
<line x1="260.5" y1="601" x2="260.5" y2="626" stroke="#00ff00"/>
<line x1="267.5" y1="601" x2="267.5" y2="626" stroke="#00ff00"/>
<line x1="273.5" y1="601" x2="273.5" y2="626" stroke="#00ff00"/>
<line x1="280.5" y1="601" x2="280.5" y2="626" stroke="#00ff00"/>
<line x1="287.5" y1="601" x2="287.5" y2="626" stroke="#00ff00"/>
<line x1="294.5" y1="601" x2="294.5" y2="626" stroke="#00ff00"/>
<line x1="300.5" y1="601" x2="300.5" y2="626" stroke="#00ff00"/>
<line x1="307.5" y1="601" x2="307.5" y2="626" stroke="#00ff00"/>
<line x1="314.5" y1="601" x2="314.5" y2="626" stroke="#00ff00"/>
<line x1="321.5" y1="601" x2="321.5" y2="626" stroke="#00ff00"/>
<line x1="327.5" y1="601" x2="327.5" y2="626" stroke="#00ff00"/>
<line x1="334.5" y1="601" x2="334.5" y2="626" stroke="#00ff00"/>
<line x1="341.5" y1="601" x2="341.5" y2="626" stroke="#00ff00"/>
<line x1="348.5" y1="601" x2="348.5" y2="626" stroke="#00ff00"/>
<line x1="354.5" y1="601" x2="354.5" y2="626" stroke="#00ff00"/>
<line x1="361.5" y1="601" x2="361.5" y2="626" stroke="#00ff00"/>
<line x1="368.5" y1="601" x2="368.5" y2="626" stroke="#00ff00"/>
<line x1="375.5" y1="601" x2="375.5" y2="626" stroke="#00ff00"/>
<line x1="382.5" y1="601" x2="382.5" y2="626" stroke="#00ff00"/>
<line x1="388.5" y1="601" x2="388.5" y2="626" stroke="#00ff00"/>
<line x1="395.5" y1="601" x2="395.5" y2="626" stroke="#00ff00"/>
<line x1="402.5" y1="601" x2="402.5" y2="626" stroke="#00ff00"/>
<line x1="409.5" y1="601" x2="409.5" y2="626" stroke="#00ff00"/>
<line x1="415.5" y1="601" x2="415.5" y2="626" stroke="#00ff00"/>
<line x1="422.5" y1="601" x2="422.5" y2="626" stroke="#00ff00"/>
<line x1="429.5" y1="601" x2="429.5" y2="626" stroke="#00ff00"/>
<line x1="436.5" y1="601" x2="436.5" y2="626" stroke="#00ff00"/>
<line x1="442.5" y1="601" x2="442.5" y2="626" stroke="#00ff00"/>
<line x1="449.5" y1="601" x2="449.5" y2="626" stroke="#00ff00"/>
<line x1="456.5" y1="601" x2="456.5" y2="626" stroke="#00ff00"/>
<line x1="463.5" y1="601" x2="463.5" y2="626" stroke="#00ff00"/>
<line x1="469.5" y1="601" x2="469.5" y2="626" stroke="#00ff00"/>
<line x1="476.5" y1="601" x2="476.5" y2="626" stroke="#00ff00"/>
<line x1="483.5" y1="601" x2="483.5" y2="626" stroke="#00ff00"/>
<line x1="490.5" y1="601" x2="490.5" y2="626" stroke="#00ff00"/>
<line x1="496.5" y1="601" x2="496.5" y2="626" stroke="#00ff00"/>
<line x1="503.5" y1="601" x2="503.5" y2="626" stroke="#00ff00"/>
<line x1="510.5" y1="601" x2="510.5" y2="626" stroke="#00ff00"/>
<line x1="517.5" y1="601" x2="517.5" y2="626" stroke="#00ff00"/>
<line x1="523.5" y1="601" x2="523.5" y2="626" stroke="#00ff00"/>
<line x1="530.5" y1="601" x2="530.5" y2="626" stroke="#00ff00"/>
<line x1="537.5" y1="601" x2="537.5" y2="626" stroke="#00ff00"/>
<line x1="544.5" y1="601" x2="544.5" y2="626" stroke="#00ff00"/>
<line x1="551.5" y1="601" x2="551.5" y2="626" stroke="#00ff00"/>
<line x1="557.5" y1="601" x2="557.5" y2="626" stroke="#00ff00"/>
<line x1="564.5" y1="601" x2="564.5" y2="626" stroke="#00ff00"/>
<line x1="571.5" y1="601" x2="571.5" y2="626" stroke="#00ff00"/>
<line x1="578.5" y1="601" x2="578.5" y2="626" stroke="#00ff00"/>
<line x1="584.5" y1="601" x2="584.5" y2="626" stroke="#00ff00"/>
<line x1="591.5" y1="601" x2="591.5" y2="626" stroke="#00ff00"/>
<line x1="598.5" y1="601" x2="598.5" y2="626" stroke="#00ff00"/>
<line x1="605.5" y1="601" x2="605.5" y2="626" stroke="#00ff00"/>
<line x1="611.5" y1="601" x2="611.5" y2="626" stroke="#00ff00"/>
<line x1="618.5" y1="601" x2="618.5" y2="626" stroke="#00ff00"/>
<line x1="625.5" y1="601" x2="625.5" y2="626" stroke="#00ff00"/>
<line x1="632.5" y1="601" x2="632.5" y2="626" stroke="#00ff00"/>
<line x1="638.5" y1="601" x2="638.5" y2="626" stroke="#00ff00"/>
<line x1="645.5" y1="601" x2="645.5" y2="626" stroke="#00ff00"/>
<line x1="652.5" y1="601" x2="652.5" y2="626" stroke="#00ff00"/>
<line x1="659.5" y1="601" x2="659.5" y2="626" stroke="#00ff00"/>
<line x1="665.5" y1="601" x2="665.5" y2="626" stroke="#00ff00"/>
<line x1="672.5" y1="601" x2="672.5" y2="626" stroke="#00ff00"/>
<line x1="679.5" y1="601" x2="679.5" y2="626" stroke="#00ff00"/>
<line x1="686.5" y1="601" x2="686.5" y2="626" stroke="#00ff00"/>
<line x1="693.5" y1="601" x2="693.5" y2="626" stroke="#00ff00"/>
<line x1="699.5" y1="601" x2="699.5" y2="626" stroke="#00ff00"/>
<line x1="706.5" y1="601" x2="706.5" y2="626" stroke="#00ff00"/>
<line x1="713.5" y1="601" x2="713.5" y2="626" stroke="#00ff00"/>
<line x1="720.5" y1="601" x2="720.5" y2="626" stroke="#00ff00"/>
<line x1="726.5" y1="601" x2="726.5" y2="626" stroke="#00ff00"/>
<line x1="733.5" y1="601" x2="733.5" y2="626" stroke="#00ff00"/>
<line x1="740.5" y1="601" x2="740.5" y2="626" stroke="#00ff00"/>
<line x1="747.5" y1="601" x2="747.5" y2="626" stroke="#00ff00"/>
<line x1="753.5" y1="601" x2="753.5" y2="626" stroke="#00ff00"/>
<line x1="760.5" y1="601" x2="760.5" y2="626" stroke="#00ff00"/>
<line x1="767.5" y1="601" x2="767.5" y2="626" stroke="#00ff00"/>
<line x1="774.5" y1="601" x2="774.5" y2="626" stroke="#00ff00"/>
<line x1="780.5" y1="601" x2="780.5" y2="626" stroke="#00ff00"/>
<line x1="787.5" y1="601" x2="787.5" y2="626" stroke="#00ff00"/>
<line x1="794.5" y1="601" x2="794.5" y2="626" stroke="#00ff00"/>
<line x1="801.5" y1="601" x2="801.5" y2="626" stroke="#00ff00"/>
<line x1="807.5" y1="601" x2="807.5" y2="626" stroke="#00ff00"/>
<line x1="814.5" y1="601" x2="814.5" y2="626" stroke="#00ff00"/>
<line x1="821.5" y1="601" x2="821.5" y2="626" stroke="#00ff00"/>
<line x1="828.5" y1="601" x2="828.5" y2="626" stroke="#00ff00"/>
<line x1="834.5" y1="601" x2="834.5" y2="626" stroke="#00ff00"/>
<line x1="841.5" y1="601" x2="841.5" y2="626" stroke="#00ff00"/>
<line x1="848.5" y1="601" x2="848.5" y2="626" stroke="#00ff00"/>
<line x1="855.5" y1="601" x2="855.5" y2="626" stroke="#00ff00"/>
<line x1="862.5" y1="601" x2="862.5" y2="626" stroke="#00ff00"/>
<line x1="868.5" y1="601" x2="868.5" y2="626" stroke="#00ff00"/>
<line x1="875.5" y1="601" x2="875.5" y2="626" stroke="#00ff00"/>
<line x1="882.5" y1="601" x2="882.5" y2="626" stroke="#00ff00"/>
<line x1="889.5" y1="601" x2="889.5" y2="626" stroke="#00ff00"/>
<line x1="895.5" y1="601" x2="895.5" y2="626" stroke="#00ff00"/>
<line x1="902.5" y1="601" x2="902.5" y2="626" stroke="#00ff00"/>
<line x1="909.5" y1="601" x2="909.5" y2="626" stroke="#00ff00"/>
<line x1="916.5" y1="601" x2="916.5" y2="626" stroke="#00ff00"/>
<line x1="922.5" y1="601" x2="922.5" y2="626" stroke="#00ff00"/>
<line x1="929.5" y1="601" x2="929.5" y2="626" stroke="#00ff00"/>
<line x1="936.5" y1="601" x2="936.5" y2="626" stroke="#00ff00"/>
<line x1="943.5" y1="601" x2="943.5" y2="626" stroke="#00ff00"/>
<line x1="949.5" y1="601" x2="949.5" y2="626" stroke="#00ff00"/>
<line x1="956.5" y1="601" x2="956.5" y2="626" stroke="#00ff00"/>
<line x1="963.5" y1="601" x2="963.5" y2="626" stroke="#00ff00"/>
<line x1="970.5" y1="601" x2="970.5" y2="626" stroke="#00ff00"/>
<line x1="976.5" y1="601" x2="976.5" y2="626" stroke="#00ff00"/>
<line x1="983.5" y1="601" x2="983.5" y2="626" stroke="#00ff00"/>
<line x1="57.5" y1="601" x2="57.5" y2="626" stroke="#ff1010"/>
<line x1="240.5" y1="601" x2="240.5" y2="626" stroke="#ff1010"/>
<line x1="375.5" y1="601" x2="375.5" y2="626" stroke="#ff1010"/>
<line x1="571.5" y1="601" x2="571.5" y2="626" stroke="#ff1010"/>
<line x1="618.5" y1="601" x2="618.5" y2="626" stroke="#ff1010"/>
<line x1="645.5" y1="601" x2="645.5" y2="626" stroke="#ff1010"/>
<line x1="794.5" y1="601" x2="794.5" y2="626" stroke="#ff1010"/>
<line x1="929.5" y1="601" x2="929.5" y2="626" stroke="#ff1010"/>
<line x1="3" y1="601.5" x2="984" y2="601.5" stroke="#a0a0a0"/><line x1="3" y1="626.5" x2="984" y2="626.5" stroke="#a0a0a0"/><line x1="983.5" y1="601" x2="983.5" y2="627" stroke="#a0a0a0"/>
<line x1="0" y1="630.5" x2="1126" y2="630.5" stroke="#b00000"/>
<line x1="0" y1="646.5" x2="1126" y2="646.5" stroke="#b00000"/>
<line x1="63.5" y1="630" x2="63.5" y2="646" stroke="#b00000"/>
<line x1="205.5" y1="630" x2="205.5" y2="646" stroke="#b00000"/>
<line x1="347.5" y1="630" x2="347.5" y2="646" stroke="#b00000"/>
<line x1="475.5" y1="630" x2="475.5" y2="646" stroke="#b00000"/>
<line x1="609.5" y1="630" x2="609.5" y2="646" stroke="#b00000"/>
<line x1="765.5" y1="630" x2="765.5" y2="646" stroke="#b00000"/>
<line x1="908.5" y1="630" x2="908.5" y2="646" stroke="#b00000"/>
<circle cx="134" cy="29" r="6" fill="#8a8a8a"/><polyline points="131,27.5 134,30.5 137,27.5" fill="none" stroke="#202020" stroke-width="1.5"/>
<circle cx="8.5" cy="405.5" r="6" fill="#8a8a8a"/><polyline points="5.5,404 8.5,407 11.5,404" fill="none" stroke="#202020" stroke-width="1.5"/>
<polyline points="61,39.5 58,39.5 57.5,43 59.5,45" fill="none" stroke="#d0d0d0" stroke-width="1"/>
<polyline points="61,42.5 63,42.5 65,43.5 67,43.5 69,44.5" fill="none" stroke="#d0d0d0" stroke-width="1"/>
<line x1="241" y1="377.5" x2="252" y2="377.5" stroke="#d0d0d0"/>
<polyline points="244,375 241.5,377.5 244,380.5" fill="none" stroke="#d0d0d0"/>
<polygon points="1047.5,24.5 1052.5,29.5 1047.5,34.5 1042.5,29.5" fill="none" stroke="#909090" stroke-width="1" shape-rendering="auto"/>
<rect x="1060.5" y="24.5" width="11" height="10" rx="2.5" fill="none" stroke="#909090" stroke-width="1.2" shape-rendering="auto"/>
<rect x="1067" y="26" width="3" height="7" fill="#909090"/>
<line x1="99.5" y1="630" x2="99.5" y2="633" stroke="#b00000"/>
<line x1="134.5" y1="630" x2="134.5" y2="633" stroke="#b00000"/>
<line x1="170.5" y1="630" x2="170.5" y2="633" stroke="#b00000"/>
<line x1="241.5" y1="630" x2="241.5" y2="633" stroke="#b00000"/>
<line x1="276.5" y1="630" x2="276.5" y2="633" stroke="#b00000"/>
<line x1="312.5" y1="630" x2="312.5" y2="633" stroke="#b00000"/>
<line x1="379.5" y1="630" x2="379.5" y2="633" stroke="#b00000"/>
<line x1="411.5" y1="630" x2="411.5" y2="633" stroke="#b00000"/>
<line x1="443.5" y1="630" x2="443.5" y2="633" stroke="#b00000"/>
<line x1="509.5" y1="630" x2="509.5" y2="633" stroke="#b00000"/>
<line x1="543.5" y1="630" x2="543.5" y2="633" stroke="#b00000"/>
<line x1="576.5" y1="630" x2="576.5" y2="633" stroke="#b00000"/>
<line x1="649.5" y1="630" x2="649.5" y2="633" stroke="#b00000"/>
<line x1="689.5" y1="630" x2="689.5" y2="633" stroke="#b00000"/>
<line x1="727.5" y1="630" x2="727.5" y2="633" stroke="#b00000"/>
<line x1="800.5" y1="630" x2="800.5" y2="633" stroke="#b00000"/>
<line x1="841.5" y1="630" x2="841.5" y2="633" stroke="#b00000"/>
<line x1="874.5" y1="630" x2="874.5" y2="633" stroke="#b00000"/>
<line x1="940.5" y1="630" x2="940.5" y2="633" stroke="#b00000"/>
<line x1="1.5" y1="646" x2="1.5" y2="650" stroke="#b00000"/>
<line x1="42.5" y1="646" x2="42.5" y2="650" stroke="#b00000"/>
<line x1="73.5" y1="646" x2="73.5" y2="650" stroke="#b00000"/>
<line x1="115.5" y1="646" x2="115.5" y2="650" stroke="#b00000"/>
<line x1="144.5" y1="646" x2="144.5" y2="650" stroke="#b00000"/>
<line x1="177.5" y1="646" x2="177.5" y2="650" stroke="#b00000"/>
<line x1="207.5" y1="646" x2="207.5" y2="650" stroke="#b00000"/>
<line x1="241.5" y1="646" x2="241.5" y2="650" stroke="#b00000"/>
<line x1="282.5" y1="646" x2="282.5" y2="650" stroke="#b00000"/>
<line x1="308.5" y1="646" x2="308.5" y2="650" stroke="#b00000"/>
<line x1="332.5" y1="646" x2="332.5" y2="650" stroke="#b00000"/>
<line x1="364.5" y1="646" x2="364.5" y2="650" stroke="#b00000"/>
<line x1="390.5" y1="646" x2="390.5" y2="650" stroke="#b00000"/>
<line x1="422.5" y1="646" x2="422.5" y2="650" stroke="#b00000"/>
<line x1="453.5" y1="646" x2="453.5" y2="650" stroke="#b00000"/>
<line x1="480.5" y1="646" x2="480.5" y2="650" stroke="#b00000"/>
<line x1="508.5" y1="646" x2="508.5" y2="650" stroke="#b00000"/>
<line x1="542.5" y1="646" x2="542.5" y2="650" stroke="#b00000"/>
<line x1="568.5" y1="646" x2="568.5" y2="650" stroke="#b00000"/>
<line x1="599.5" y1="646" x2="599.5" y2="650" stroke="#b00000"/>
<line x1="628.5" y1="646" x2="628.5" y2="650" stroke="#b00000"/>
<line x1="663.5" y1="646" x2="663.5" y2="650" stroke="#b00000"/>
<line x1="696.5" y1="646" x2="696.5" y2="650" stroke="#b00000"/>
<line x1="735.5" y1="646" x2="735.5" y2="650" stroke="#b00000"/>
<line x1="766.5" y1="646" x2="766.5" y2="650" stroke="#b00000"/>
<line x1="807.5" y1="646" x2="807.5" y2="650" stroke="#b00000"/>
<line x1="839.5" y1="646" x2="839.5" y2="650" stroke="#b00000"/>
<line x1="871.5" y1="646" x2="871.5" y2="650" stroke="#b00000"/>
<line x1="908.5" y1="646" x2="908.5" y2="650" stroke="#b00000"/>
<line x1="940.5" y1="646" x2="940.5" y2="650" stroke="#b00000"/>
<rect x="7" y="648" width="2" height="2" fill="#c0c0c0"/><rect x="12" y="648" width="2" height="2" fill="#c0c0c0"/><rect x="18" y="648" width="3" height="2" fill="#c0c0c0"/><rect x="51" y="648" width="1" height="2" fill="#c0c0c0"/>
<polygon points="650.5,383.5 653.5,387 647.5,387" fill="#ff0000"/>
</svg>
<div class="t" style="left:27px;top:3px;color:#c8c8c8;font-size:12px;">分时</div>
<div class="t" style="left:61px;top:3px;color:#c8c8c8;font-size:12px;">1分钟</div>
<div class="t" style="left:99px;top:3px;color:#c8c8c8;font-size:12px;">5分钟</div>
<div class="t" style="left:139px;top:3px;color:#c8c8c8;font-size:12px;">15分钟</div>
<div class="t" style="left:185px;top:3px;color:#c8c8c8;font-size:12px;">30分钟</div>
<div class="t" style="left:231px;top:3px;color:#c8c8c8;font-size:12px;">60分钟</div>
<div class="t" style="left:278px;top:3px;color:#54ffff;font-size:12px;">日线</div>
<div class="t" style="left:312px;top:3px;color:#c8c8c8;font-size:12px;">周线</div>
<div class="t" style="left:345px;top:3px;color:#c8c8c8;font-size:12px;">月线</div>
<div class="t" style="left:378px;top:3px;color:#c8c8c8;font-size:12px;">多周期</div>
<div class="t" style="left:422px;top:3px;color:#c8c8c8;font-size:12px;">更多 &gt;</div>
<div class="t" style="left:816px;top:3px;color:#c8c8c8;font-size:12px;">复权</div>
<div class="t" style="left:850px;top:3px;color:#c8c8c8;font-size:12px;">叠加</div>
<div class="t" style="left:885px;top:3px;color:#c8c8c8;font-size:12px;">多股</div>
<div class="t" style="left:920px;top:3px;color:#c8c8c8;font-size:12px;">统计</div>
<div class="t" style="left:955px;top:3px;color:#c8c8c8;font-size:12px;">画线</div>
<div class="t" style="left:992px;top:3px;color:#c8c8c8;font-size:12px;">F10</div>
<div class="t" style="left:1025px;top:3px;color:#c8c8c8;font-size:12px;">标记</div>
<div class="t" style="left:1057px;top:3px;color:#c8c8c8;font-size:12px;">+自选</div>
<div class="t" style="left:1096px;top:3px;color:#c8c8c8;font-size:12px;">返回</div>
<div class="t" style="left:3px;top:22px;color:#c8c8c8;font-size:12px;">宝通科技(日线.前复权)</div>
<div class="t" style="left:1090.5px;top:354px;color:#ff3c3c;font-size:12px;">20.00</div>
<div class="t" style="left:1090.5px;top:291px;color:#ff3c3c;font-size:12px;">24.00</div>
<div class="t" style="left:1090.5px;top:259px;color:#ff3c3c;font-size:12px;">26.00</div>
<div class="t" style="left:1090.5px;top:228px;color:#ff3c3c;font-size:12px;">28.00</div>
<div class="t" style="left:1090.5px;top:196px;color:#ff3c3c;font-size:12px;">30.00</div>
<div class="t" style="left:1090.5px;top:164px;color:#ff3c3c;font-size:12px;">32.00</div>
<div class="t" style="left:1090.5px;top:133px;color:#ff3c3c;font-size:12px;">34.00</div>
<div class="t" style="left:1090.5px;top:101px;color:#ff3c3c;font-size:12px;">36.00</div>
<div class="t" style="left:1090.5px;top:69px;color:#ff3c3c;font-size:12px;">38.00</div>
<div class="t" style="left:1090.5px;top:38px;color:#ff3c3c;font-size:12px;">40.00</div>
<div style="position:absolute;left:1076px;top:318px;width:50px;height:16px;background:#00007a;border-top:1px solid #c00000;border-bottom:1px solid #c00000;box-sizing:border-box"></div>
<div class="t" style="left:1076.5px;top:319px;color:#e0e0e0;font-size:12px;">21.66</div>
<div class="t" style="left:72px;top:39.5px;color:#d0d0d0;font-size:12.5px;">40.20</div>
<div class="t" style="left:253px;top:372px;color:#d0d0d0;font-size:12.5px;">18.93</div>
<div class="t" style="left:1091px;top:435px;color:#ff3c3c;font-size:12px;">75.00</div>
<div class="t" style="left:1091px;top:472px;color:#ff3c3c;font-size:12px;">60.00</div>
<div class="t" style="left:1091px;top:509px;color:#ff3c3c;font-size:12px;">45.00</div>
<div class="t" style="left:1091px;top:546px;color:#ff3c3c;font-size:12px;">30.00</div>
<div class="t" style="left:1091px;top:583px;color:#ff3c3c;font-size:12px;">15.00</div>
<div class="t" style="left:36px;top:382px;width:13px;height:13px;background:#8b0000;color:#fff;font-size:12px;line-height:13px;text-align:center">涨</div>
<div class="t" style="left:57px;top:382px;width:13px;height:13px;background:#8b4513;color:#fff;font-size:12px;line-height:13px;text-align:center">榜</div>
<div class="t" style="left:219px;top:382px;width:13px;height:13px;background:#006400;color:#fff;font-size:12px;line-height:13px;text-align:center">跌</div>
<div class="t" style="left:808px;top:382px;width:13px;height:13px;background:#006400;color:#fff;font-size:12px;line-height:13px;text-align:center">减</div>
<div class="t" style="left:895px;top:382px;width:13px;height:13px;background:#1a3a7a;color:#fff;font-size:12px;line-height:13px;text-align:center">财</div>
<div class="t" style="left:647px;top:386px;color:#ff0000;font-size:10px;font-weight:bold;line-height:10px">S</div>
<div class="t" style="left:18px;top:398px;color:#c8c8c8;font-size:12px;">股朋指标网</div>
<div class="t" style="left:82px;top:398px;color:#ff2020;font-size:12px;">堪称一绝: 80.00</div>
<div class="t" style="left:172px;top:398px;color:#00ff00;font-size:12px;">持币: 0.00</div>
<div class="t" style="left:232px;top:398px;color:#a8a8a8;font-size:12px;">地狱底: 0.00</div>
<div class="t" style="left:302px;top:398px;color:#a8a8a8;font-size:12px;">地狱线: 10.00</div>
<div class="t" style="left:380px;top:398px;color:#ff1493;font-size:12px;">地平线: 20.00</div>
<div class="t" style="left:459px;top:398px;color:#a8a8a8;font-size:12px;">天际线: 80.00</div>
<div class="t" style="left:537px;top:398px;color:#ffffff;font-size:12px;">神仙: 30.51</div>
<div class="t" style="left:602px;top:398px;color:#ffff00;font-size:12px;">魔鬼: 33.92</div>
<div class="t" style="left:668px;top:398px;color:#ff00ff;font-size:12px;">轨迹: 36.18</div>
<div class="t" style="left:733px;top:398px;color:#00ff00;font-size:12px;">财神到: 0.00</div>
<div class="t" style="left:1px;top:615px;color:#909090;font-size:12px;">用到未来数据</div>
<div class="t" style="left:3px;top:632px;color:#ff3c3c;font-size:12px;">2025年</div>
<div class="t" style="left:65px;top:632px;color:#ff3c3c;font-size:12px;">3</div>
<div class="t" style="left:207px;top:632px;color:#ff3c3c;font-size:12px;">4</div>
<div class="t" style="left:349px;top:632px;color:#ff3c3c;font-size:12px;">5</div>
<div class="t" style="left:477px;top:632px;color:#ff3c3c;font-size:12px;">6</div>
<div class="t" style="left:611px;top:632px;color:#ff3c3c;font-size:12px;">7</div>
<div class="t" style="left:767px;top:632px;color:#ff3c3c;font-size:12px;">8</div>
<div class="t" style="left:910px;top:632px;color:#ff3c3c;font-size:12px;">9</div>
<div style="position:absolute;left:777px;top:632px;width:78px;height:14px;background:#00007a"></div>
<div class="t" style="left:779px;top:632px;color:#e0e0e0;font-size:12px;">2025/08/05/二</div>
<div style="position:absolute;left:984px;top:600px;width:146px;height:50px;background:#000"></div>
<div class="t" style="left:1017px;top:606px;color:#f0f0f0;font-size:18px;font-weight:bold;line-height:18px">股朋指标网</div>
<div class="t" style="left:991px;top:626px;color:#e8e8e8;font-size:16px;-webkit-text-stroke:0.4px #e8e8e8;letter-spacing:1.2px;line-height:16px">www.7gpzb.com</div>
</body></html>
